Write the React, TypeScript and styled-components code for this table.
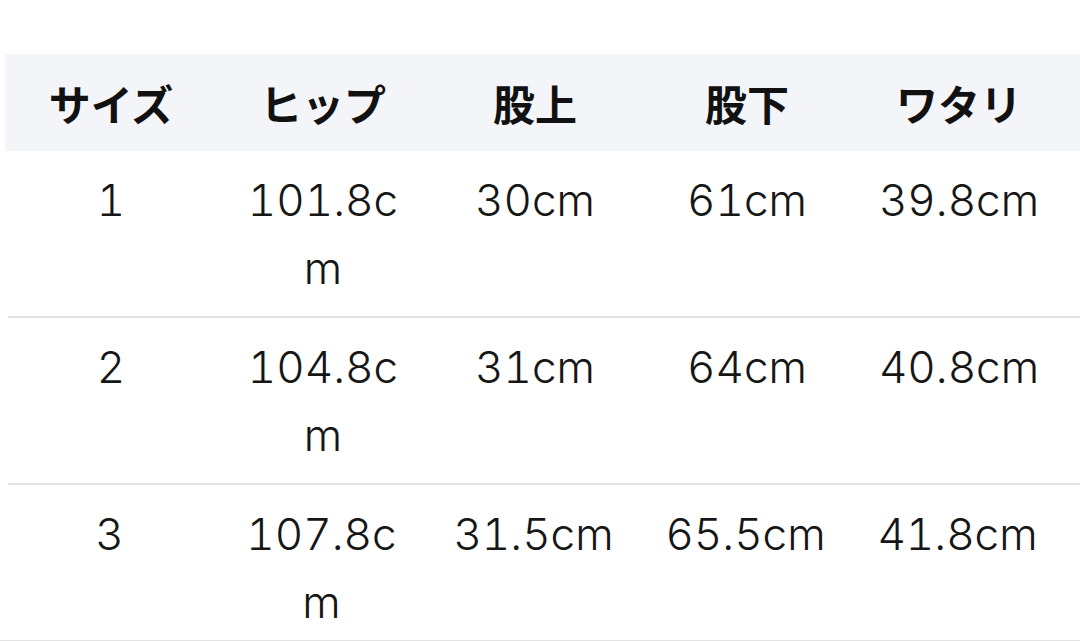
import React from "react";
import styled, { createGlobalStyle } from "styled-components";

const Global = createGlobalStyle`
  html, body { margin: 0; padding: 0; background: #ffffff; }
  body { font-family: "Noto Sans CJK JP", "Noto Sans", sans-serif; color: #1a1a1a; overflow: hidden; }
`;

const Page = styled.div`
  width: 1080px;
  height: 641px;
  padding-top: 54px;
  box-sizing: border-box;
  overflow: hidden;
`;

const Table = styled.div`
  display: flex;
  flex-direction: column;
`;

const HeaderRow = styled.div`
  display: grid;
  grid-template-columns: repeat(5, 212px) 1fr;
  margin-left: 5px;
  background: #f4f5f9;
  padding: 15px 0 14px;
`;

const Row = styled.div<{ $last?: boolean }>`
  display: grid;
  grid-template-columns: repeat(5, 212px) 1fr;
  margin-left: ${(p) => (p.$last ? "0" : "8px")};
  padding: 15px 0 ${(p) => (p.$last ? "4px" : "14px")} ${(p) => (p.$last ? "5px" : "0")};
  border-bottom: 2px solid #e3e3e3;
`;

const HeadCell = styled.div`
  text-align: center;
  font-size: 42px;
  font-weight: 700;
  line-height: 68px;
  color: #111;
`;

const Cell = styled.div<{ $shift?: number }>`
  text-align: center;
  font-family: "Inter", "Noto Sans CJK JP", sans-serif;
  font-size: 44px;
  font-weight: 300;
  font-variant-numeric: tabular-nums;
  line-height: 68px;
  padding: 0 22px;
  word-break: break-all;
  color: #161616;
  margin-left: ${(p) => (p.$shift ? `${p.$shift}px` : "0")};
`;

const headers = ["サイズ", "ヒップ", "股上", "股下", "ワタリ"];
const rows = [
  ["1", "101.8cm", "30cm", "61cm", "39.8cm"],
  ["2", "104.8cm", "31cm", "64cm", "40.8cm"],
  ["3", "107.8cm", "31.5cm", "65.5cm", "41.8cm"],
];

export default function App() {
  return (
    <Page>
      <Global />
      <Table>
        <HeaderRow>
          {headers.map((h) => (
            <HeadCell key={h}>{h}</HeadCell>
          ))}
        </HeaderRow>
        {rows.map((r, i) => (
          <Row key={i} $last={i === rows.length - 1}>
            {r.map((c, j) => (
              <Cell key={j} $shift={i === rows.length - 1 ? -3 : -6}>
                {c}
              </Cell>
            ))}
          </Row>
        ))}
      </Table>
    </Page>
  );
}
